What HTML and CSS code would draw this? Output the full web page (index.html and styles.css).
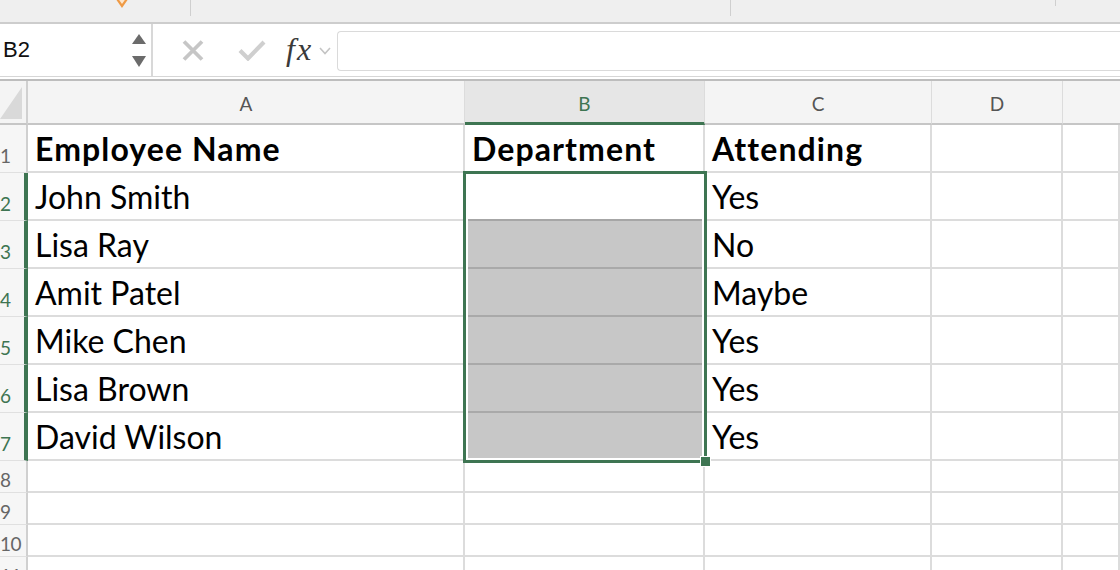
FILE: index.html
```html
<!DOCTYPE html>
<html>
<head>
<meta charset="utf-8">
<link rel="stylesheet" href="styles.css">
</head>
<body>
<div class="app">
  <div class="topstrip">
    <svg class="orange" width="18" height="9" viewBox="0 0 18 9"><polygon points="1,-4 8,6 15,-4" fill="#fde6cc" stroke="#ef9a45" stroke-width="2.2"/></svg>
    <span class="tdiv d1"></span>
    <span class="tdiv d2"></span>
    <span class="tdiv d3"></span>
  </div>
  <div class="formulabar">
    <div class="namebox">
      <span class="ref">B2</span>
      <svg class="spin" width="14" height="34" viewBox="0 0 14 34"><polygon points="7,0 14,10 0,10" fill="#6b6b6b"/><polygon points="0,22 14,22 7,33" fill="#6b6b6b"/></svg>
    </div>
    <svg class="icon-x" width="22" height="21" viewBox="0 0 22 21"><path d="M2 1.5 L20 19.5 M20 1.5 L2 19.5" stroke="#c6c6c6" stroke-width="3.8" fill="none"/></svg>
    <svg class="icon-check" width="28" height="21" viewBox="0 0 28 21"><path d="M2 10.5 L10 18.5 L26 2" stroke="#cfcfcf" stroke-width="4.2" fill="none"/></svg>
    <span class="fx">fx</span>
    <svg class="chev" width="12" height="8" viewBox="0 0 12 8"><path d="M1 1 L6 6.5 L11 1" stroke="#c4c4c4" stroke-width="1.6" fill="none"/></svg>
    <div class="finput"></div>
  </div>
  <div class="sep"></div>
  <div class="sheet">
    <div class="corner"><svg width="28" height="44" viewBox="0 0 28 44"><polygon points="0,38 22,38 22,6" fill="#d9d9d9"/></svg></div>
    <div class="colhdr">A</div>
    <div class="colhdr active">B</div>
    <div class="colhdr">C</div>
    <div class="colhdr">D</div>
    <div class="colhdr last"></div>

    <div class="rowhdr">1</div>
    <div class="cell bold">Employee Name</div>
    <div class="cell bold">Department</div>
    <div class="cell bold">Attending</div>
    <div class="cell"></div>
    <div class="cell"></div>

    <div class="rowhdr sel">2</div>
    <div class="cell">John Smith</div>
    <div class="cell b-top"></div>
    <div class="cell">Yes</div>
    <div class="cell"></div>
    <div class="cell"></div>

    <div class="rowhdr sel">3</div>
    <div class="cell">Lisa Ray</div>
    <div class="cell b-fill"></div>
    <div class="cell">No</div>
    <div class="cell"></div>
    <div class="cell"></div>

    <div class="rowhdr sel">4</div>
    <div class="cell">Amit Patel</div>
    <div class="cell b-fill"></div>
    <div class="cell">Maybe</div>
    <div class="cell"></div>
    <div class="cell"></div>

    <div class="rowhdr sel">5</div>
    <div class="cell">Mike Chen</div>
    <div class="cell b-fill"></div>
    <div class="cell">Yes</div>
    <div class="cell"></div>
    <div class="cell"></div>

    <div class="rowhdr sel">6</div>
    <div class="cell">Lisa Brown</div>
    <div class="cell b-fill"></div>
    <div class="cell">Yes</div>
    <div class="cell"></div>
    <div class="cell"></div>

    <div class="rowhdr sel">7</div>
    <div class="cell">David Wilson</div>
    <div class="cell b-fill"></div>
    <div class="cell">Yes</div>
    <div class="cell"></div>
    <div class="cell"></div>

    <div class="rowhdr small">8</div>
    <div class="cell small"></div><div class="cell small"></div><div class="cell small"></div><div class="cell small"></div><div class="cell small"></div>
    <div class="rowhdr small">9</div>
    <div class="cell small"></div><div class="cell small"></div><div class="cell small"></div><div class="cell small"></div><div class="cell small"></div>
    <div class="rowhdr small dd">10</div>
    <div class="cell small"></div><div class="cell small"></div><div class="cell small"></div><div class="cell small"></div><div class="cell small"></div>
    <div class="rowhdr small dd">11</div>
    <div class="cell small"></div><div class="cell small"></div><div class="cell small"></div><div class="cell small"></div><div class="cell small"></div>

    <div class="selection"><span class="handle"></span></div>
  </div>
</div>
</body>
</html>
```

FILE: styles.css
```css
* { box-sizing: border-box; }
html, body { margin: 0; padding: 0; background: #fff; }
body { width: 1120px; height: 570px; overflow: hidden; font-family: "Lato", "Liberation Sans", sans-serif; }
.app { width: 1120px; height: 570px; overflow: hidden; display: flex; flex-direction: column; }

.topstrip { height: 24px; flex: none; background: #efefef; border-bottom: 2px solid #cdcdcd; position: relative; }
.orange { position: absolute; left: 114px; top: 0; }
.tdiv { position: absolute; top: 0; width: 1px; background: #cfcfcf; }
.d1 { left: 190px; height: 16px; }
.d2 { left: 730px; height: 16px; }
.d3 { left: 1055px; height: 6px; }

.formulabar { height: 53px; flex: none; display: flex; align-items: center; background: #fff; border-bottom: 1px solid #d6d6d6; }
.namebox { width: 153px; height: 100%; flex: none; display: flex; align-items: center; justify-content: space-between; padding: 0 5px 0 3px; border-right: 2px solid #d8d8d8; }
.ref { font-family: "Liberation Sans", Arial, sans-serif; font-size: 22px; color: #111; margin-top: -1px; }
.spin { margin-top: 1px; }
.icon-x { margin-left: 29px; flex: none; }
.icon-check { margin-left: 34px; flex: none; }
.fx { margin-left: 20px; font-family: "Liberation Serif", "Times New Roman", serif; font-style: italic; font-size: 32px; color: #3a3a3a; letter-spacing: 2px; line-height: 1; margin-top: -2px; }
.chev { margin-left: 6px; flex: none; margin-top: 2px; }
.finput { margin-left: 6px; flex: 1; height: 40px; border: 1px solid #dadada; border-right: none; border-radius: 4px 0 0 4px; margin-top: 2px; }

.sep { height: 4px; flex: none; border-top: 2px solid #fff; border-bottom: 2px solid #bdbdbd; }

.sheet { position: relative; display: grid; grid-template-columns: 28px 437px 240px 227px 131px 1fr; grid-template-rows: 44px repeat(7, 48px) repeat(4, 32px); }

.corner { background: #f4f4f4; border-right: 2px solid #d0d0d0; border-bottom: 2px solid #c6c6c6; overflow: hidden; }
.corner svg { display: block; }
.colhdr { background: #f4f4f4; border-right: 1px solid #dcdcdc; border-bottom: 2px solid #c6c6c6; display: flex; align-items: center; justify-content: center; font-size: 19px; color: #555; padding-top: 2px; }
.colhdr.active { background: #e6e6e6; color: #3e7552; border-bottom: 3px solid #3e7552; padding-top: 3px; }
.colhdr.last { border-right: none; }

.rowhdr { background: #f6f6f6; border-right: 2px solid #d0d0d0; border-bottom: 1px solid #e0e0e0; display: flex; align-items: flex-end; justify-content: flex-start; padding: 0 0 7px 0; font-size: 19px; line-height: 19px; color: #666; white-space: nowrap; }
.rowhdr.sel { color: #3e7552; border-right: 4px solid #3e7552; }
.rowhdr.small { padding-bottom: 3px; }
.rowhdr.dd { letter-spacing: -0.5px; }

.cell { border-right: 2px solid #dcdcdc; border-bottom: 2px solid #dcdcdc; display: flex; align-items: flex-end; padding: 0 6px 6px 7px; font-size: 32px; line-height: 32px; color: #000; white-space: nowrap; }
.cell.bold { font-weight: 700; letter-spacing: 1.1px; }
.b-top { border-bottom-color: #a6a6a6; }
.b-fill { background: #c7c7c7; border-bottom-color: #a9a9a9; }

.selection { position: absolute; left: 463px; top: 90px; width: 244px; height: 292px; border: 3px solid #3e7552; box-shadow: inset 0 0 0 2px #fff; }
.handle { position: absolute; right: -7px; bottom: -7px; width: 11px; height: 11px; background: #3e7552; border: 1px solid #fff; }
```
